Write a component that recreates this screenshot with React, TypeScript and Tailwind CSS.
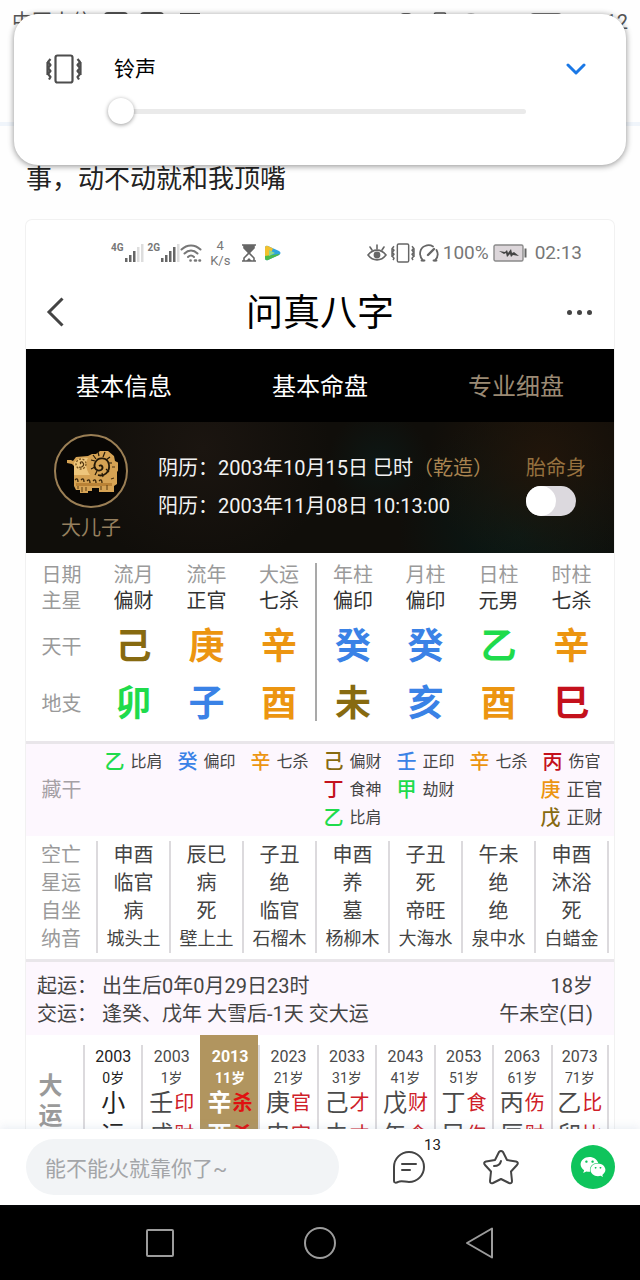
import React from 'react';
import clsx from 'clsx';
import { FaWeixin } from 'react-icons/fa';

type Element = 'wood' | 'fire' | 'earth' | 'metal' | 'water';

// 五行颜色
const ELEMENT_COLOR: Record<Element, string> = {
    wood: 'text-[#1fdb4c]',
    fire: 'text-[#c4111c]',
    earth: 'text-[#876a10]',
    metal: 'text-[#ec9510]',
    water: 'text-[#3a82e6]',
};

interface Stem {
    char: string;
    element: Element;
}

interface HiddenStem extends Stem {
    god: string;
    large?: boolean;
}

interface Pillar {
    name: string;
    star: string;
    stem: Stem;
    branch: Stem;
    hidden: HiddenStem[];
    details: string[];
}

const PILLARS: Pillar[] = [
    {
        name: '流月', star: '偏财',
        stem: { char: '己', element: 'earth' }, branch: { char: '卯', element: 'wood' },
        hidden: [{ char: '乙', element: 'wood', god: '比肩' }],
        details: ['申酉', '临官', '病', '城头土'],
    },
    {
        name: '流年', star: '正官',
        stem: { char: '庚', element: 'metal' }, branch: { char: '子', element: 'water' },
        hidden: [{ char: '癸', element: 'water', god: '偏印' }],
        details: ['辰巳', '病', '死', '壁上土'],
    },
    {
        name: '大运', star: '七杀',
        stem: { char: '辛', element: 'metal' }, branch: { char: '酉', element: 'metal' },
        hidden: [{ char: '辛', element: 'metal', god: '七杀' }],
        details: ['子丑', '绝', '临官', '石榴木'],
    },
    {
        name: '年柱', star: '偏印',
        stem: { char: '癸', element: 'water' }, branch: { char: '未', element: 'earth' },
        hidden: [
            { char: '己', element: 'earth', god: '偏财' },
            { char: '丁', element: 'fire', god: '食神' },
            { char: '乙', element: 'wood', god: '比肩' },
        ],
        details: ['申酉', '养', '墓', '杨柳木'],
    },
    {
        name: '月柱', star: '偏印',
        stem: { char: '癸', element: 'water' }, branch: { char: '亥', element: 'water' },
        hidden: [
            { char: '壬', element: 'water', god: '正印' },
            { char: '甲', element: 'wood', god: '劫财' },
        ],
        details: ['子丑', '死', '帝旺', '大海水'],
    },
    {
        name: '日柱', star: '元男',
        stem: { char: '乙', element: 'wood' }, branch: { char: '酉', element: 'metal' },
        hidden: [{ char: '辛', element: 'metal', god: '七杀' }],
        details: ['午未', '绝', '绝', '泉中水'],
    },
    {
        name: '时柱', star: '七杀',
        stem: { char: '辛', element: 'metal' }, branch: { char: '巳', element: 'fire' },
        hidden: [
            { char: '丙', element: 'fire', god: '伤官' },
            { char: '庚', element: 'metal', god: '正官', large: true },
            { char: '戊', element: 'earth', god: '正财', large: true },
        ],
        details: ['申酉', '沐浴', '死', '白蜡金'],
    },
];

const DETAIL_LABELS = ['空亡', '星运', '自坐', '纳音'];

const LUCK_CYCLES = [
    { year: '2003', age: '0岁', top: ['小', ''], bottom: ['运', ''] },
    { year: '2003', age: '1岁', top: ['壬', '印'], bottom: ['戌', '财'] },
    { year: '2013', age: '11岁', top: ['辛', '杀'], bottom: ['酉', '杀'] },
    { year: '2023', age: '21岁', top: ['庚', '官'], bottom: ['申', '官'] },
    { year: '2033', age: '31岁', top: ['己', '才'], bottom: ['未', '才'] },
    { year: '2043', age: '41岁', top: ['戊', '财'], bottom: ['午', '食'] },
    { year: '2053', age: '51岁', top: ['丁', '食'], bottom: ['巳', '伤'] },
    { year: '2063', age: '61岁', top: ['丙', '伤'], bottom: ['辰', '财'] },
    { year: '2073', age: '71岁', top: ['乙', '比'], bottom: ['卯', '比'] },
];

const ACTIVE_CYCLE = 2;

/* ---------- 图标 ---------- */

const VibrateIcon: React.FC<{ className?: string }> = ({ className }) => (
    <svg viewBox="0 0 36 30" className={className} fill="none" stroke="currentColor" strokeWidth="2.200" strokeLinejoin="round">
        <rect x="9.500" y="1.500" width="17" height="27" rx="2" />
        <path d="M4.500 5L2 8l2.500 3L2 14l2.500 3L2 20l2.500 3L3 25.500M1.500 8v13M31.500 5L34 8l-2.500 3 2.500 3-2.500 3 2.500 3-2.500 3 1.500 2.500M34.500 8v13" />
    </svg>
);

const SignalIcon: React.FC<{ bars: number }> = ({ bars }) => (
    <svg viewBox="0 0 20 18" className="h-[18px] w-5">
        {[0, 1, 2, 3, 4].map((i) => (
            <rect
                key={i}
                x={1 + i * 4}
                y={[14, 11, 7, 3, 0][i]}
                width="2.500"
                height={[4, 7, 11, 15, 18][i]}
                fill={i < bars ? '#666' : '#ddd'}
            />
        ))}
    </svg>
);

const WifiIcon = () => (
    <svg viewBox="0 0 22 18" className="h-[18px] w-[22px]" fill="none" stroke="#777" strokeWidth="2" strokeLinecap="round">
        <path d="M1.500 5.500C7 0 15 0 20.500 5.500M4.500 9.500c4-4 9-4 13 0M8 13c2-2 4-2 6 0" />
        <path d="M10.500 16.500h.1M15 16.500h1M19.500 16.500h.5" strokeWidth="2.600" />
    </svg>
);

const HourglassIcon = () => (
    <svg viewBox="0 0 14 18" className="h-[18px] w-[14px]" fill="none" stroke="#666" strokeWidth="1.600">
        <path d="M0 1h14M0 17h14M2 1v3l5 5 5-5V1M2 17v-3l5-5 5 5v3" />
        <path d="M2 1h10v3L7 9 2 4zM4 17l3-3 3 3z" fill="#666" stroke="none" />
    </svg>
);

const PlayIcon = () => (
    <svg viewBox="0 0 17 16" className="h-4 w-[17px]">
        <path d="M1 3Q1 0 4 1l11 5q3 2 0 4L4 15q-3 1-3-2z" fill="#2fa4dd" />
        <path d="M1 3Q1 0 4 1l5 2.500L5 12l-4 1z" fill="#f2c12e" />
        <path d="M1 11l14-2q1 0 0 1L4 15q-3 1-3-2z" fill="#4cbb4a" />
        <path d="M5 5l6 3-6 3z" fill="#8fd88c" />
    </svg>
);

const EyeIcon = () => (
    <svg viewBox="0 0 20 18" className="h-[18px] w-5" fill="none" stroke="#666" strokeWidth="1.600" strokeLinecap="round">
        <path d="M1 11c5-6.500 13-6.500 18 0-5 6.500-13 6.500-18 0z" />
        <circle cx="10" cy="11" r="2.600" fill="#666" />
        <path d="M10 5V1M5 6L3 3M15 6l2-3" />
    </svg>
);

const GaugeIcon = () => (
    <svg viewBox="0 0 20 18" className="h-[18px] w-5" fill="none" stroke="#666" strokeWidth="1.800" strokeLinecap="round">
        <path d="M4 16.500C-1 11 1 4 6 2c3-1.300 6-.8 8 .5M17.500 6c2 4 1.500 7.500-1.500 10.500" />
        <path d="M9 11l6-6" strokeWidth="2.400" />
        <path d="M2.500 16.500h3M14.500 16.500h3" />
    </svg>
);

const BatteryIcon = () => (
    <svg viewBox="0 0 34 18" className="h-[18px] w-[34px]">
        <rect x="1" y="1" width="29" height="16" rx="1.500" fill="#dcd6da" stroke="#8b8b8b" strokeWidth="1.400" />
        <rect x="31.500" y="4.500" width="2" height="9" fill="#666" />
        <path d="M6 7l6 1 2-2 1 3 3-4 1 4 2-1 5 4-6-1-2 2-1-3-3 3-1-4-2 1z" fill="#444" />
    </svg>
);

const RamIcon = () => (
    <svg viewBox="0 0 54 44" className="h-11 w-[54px]" fill="none">
        <path
            d="M3 11h4l2 1 3-4 12-1 4-2h4l4-3h8l6 5 1 5 4 2v6l-2 3v12l-3 2v6H35v-4h-7v3h-4v3h-8v-4h-4l-2-4V17l-2-2-5-1z"
            fill="#d6a354"
        />
        <path d="M10 14c3-5 8-6 14-5-3 4-2 12 2 17H10z" fill="#eec67c" />
        <path d="M12 34h36v3H12z" fill="#b98236" />
        <path d="M35 17c3-2 5 2 2 4-4 2-8-2-6-7 3-7 13-6 14 2 1 7-5 12-11 10" stroke="#231808" strokeWidth="1.800" />
        <path
            d="M27 11l4 1M29 6l3 4M34 3l1 4M41 3l-2 5M46 8l-4 3M48 14l-4 0M45 23l-3-3M39 28l-1-4M31 26l2-4M27 20l4-2"
            stroke="#231808"
            strokeWidth="1.200"
        />
        <circle cx="17" cy="15" r="5" stroke="#7a5520" strokeWidth="1.300" strokeDasharray="2 1.500" />
        <path d="M17 15c-2-2 1-3 2-1 2 2-1 5-4 4" stroke="#50340f" strokeWidth="1.200" />
        <path d="M11 31c2-2 3-1 3 2M17 31c2-2 3-1 3 2M23 32c2-2 3-1 3 2M29 32c2-2 3-1 3 2M35 32c2-2 3-1 3 2" stroke="#3a260a" strokeWidth="1.300" />
        <path d="M14 37v3M18 38v5M22 38v4M37 37v4M43 36v5" stroke="#5b3d12" strokeWidth="1" />
        <path d="M48 18h3M47 30l3-1" stroke="#4b3110" strokeWidth="1.200" />
    </svg>
);

/* ---------- 页面区块 ---------- */

const RingerPanel = () => (
    <section className="absolute inset-x-[14px] top-[14px] h-[151px] rounded-[24px] bg-white px-8 pt-9 shadow-[0_1px_6px_rgba(0,0,0,0.45)]">
        <div className="flex h-[38px] items-center">
            <VibrateIcon className="h-[30px] w-9 text-[#4d4d4d]" />
            <label htmlFor="ringer" className="ml-8 flex-1 text-[21px] leading-8 text-black">铃声</label>
            <button type="button" aria-label="展开" className="mr-2 text-[#1a78e6]">
                <svg viewBox="0 0 20 12" className="h-3 w-5" fill="none" stroke="currentColor" strokeWidth="3" strokeLinecap="round" strokeLinejoin="round">
                    <path d="M2 2l8 8 8-8" />
                </svg>
            </button>
        </div>
        <div className="ml-[62px] mr-[68px] mt-[10px] flex h-[26px] items-center">
            <input
                id="ringer"
                type="range"
                min="0"
                max="15"
                defaultValue="0"
                className="h-[5px] w-full appearance-none rounded-full bg-[#eaeaea] [&::-webkit-slider-thumb]:h-[26px] [&::-webkit-slider-thumb]:w-[26px] [&::-webkit-slider-thumb]:appearance-none [&::-webkit-slider-thumb]:rounded-full [&::-webkit-slider-thumb]:bg-white [&::-webkit-slider-thumb]:shadow-[0_1px_4px_rgba(0,0,0,0.4)]"
            />
        </div>
    </section>
);

const SystemStatusBar = () => (
    <div className="flex h-11 items-center px-3 text-xl text-[#555]">
        <span>中国电信</span>
        <span className="ml-3 h-5 w-6 rounded bg-[#555]" />
        <span className="ml-3 h-5 w-6 rounded bg-[#555]" />
        <span className="ml-4 h-[18px] w-5 bg-[#555]" />
        <span className="ml-auto mr-4 h-[18px] w-3 rounded-sm bg-[#666]" />
        <VibrateIcon className="mr-2 h-5 w-6" />
        <WifiIcon />
        <span className="ml-12 mr-[44px] h-[18px] w-8 rounded-sm border-2 border-[#777]" />
        <span>12</span>
    </div>
);

const ShotStatusBar = () => (
    <div className="flex h-[66px] items-center pl-[85px] pr-8 text-[#777]">
        <span className="self-start pt-5 text-[10px] font-bold leading-4">4G</span>
        <SignalIcon bars={3} />
        <span className="ml-1 self-start pt-5 text-[10px] font-bold leading-4">2G</span>
        <SignalIcon bars={4} />
        <WifiIcon />
        <span className="ml-2 flex flex-col text-center text-[13px] leading-[15px]">
            <span>4</span>
            <span>K/s</span>
        </span>
        <span className="ml-3"><HourglassIcon /></span>
        <span className="ml-2"><PlayIcon /></span>
        <span className="ml-auto"><EyeIcon /></span>
        <VibrateIcon className="ml-1 h-5 w-6 text-[#666]" />
        <span className="ml-1"><GaugeIcon /></span>
        <span className="ml-1 text-[19px]">100%</span>
        <span className="ml-1"><BatteryIcon /></span>
        <span className="ml-2 text-[19px]">02:13</span>
    </div>
);

const ShotHeader = () => (
    <header className="grid h-[63px] grid-cols-[1fr_auto_1fr] items-center px-5 pb-3">
        <button type="button" aria-label="返回" className="w-fit">
            <svg viewBox="0 0 18 30" className="h-[30px] w-[18px]" fill="none" stroke="#444" strokeWidth="3">
                <path d="M16.500 1.500L3 15l13.500 13.500" />
            </svg>
        </button>
        <h1 className="pt-1 text-[37px] leading-[48px] text-black">问真八字</h1>
        <button type="button" aria-label="更多" className="flex w-fit gap-[5px] justify-self-end pr-[2px]">
            <span className="h-[5px] w-[5px] rounded-full bg-[#444]" />
            <span className="h-[5px] w-[5px] rounded-full bg-[#444]" />
            <span className="h-[5px] w-[5px] rounded-full bg-[#444]" />
        </button>
    </header>
);

const ShotTabs = () => (
    <nav className="grid h-[73px] grid-cols-3 bg-black pt-[2px] text-2xl text-white">
        <button type="button">基本信息</button>
        <button type="button">基本命盘</button>
        <button type="button" className="text-[#9b8a74]">专业细盘</button>
    </nav>
);

const Profile = () => (
    <div className="flex h-[131px] bg-[#100e0a] bg-[radial-gradient(circle_at_88%_28%,#21150a_0,transparent_22%),radial-gradient(circle_at_84%_85%,#081a17_0,transparent_24%),radial-gradient(circle_at_60%_30%,#0d1714_0,transparent_14%),radial-gradient(circle_at_30%_20%,#1b1510_0,transparent_30%)] px-7 text-xl text-[#f2f2f2]">
        <div className="flex w-[74px] flex-col items-center pt-3">
            <div className="flex h-[74px] w-[74px] items-center justify-center rounded-full border-2 border-[#9b7f55] bg-[#080604]">
                <RamIcon />
            </div>
            <span className="mt-1 leading-8 text-[#96805f]">大儿子</span>
        </div>
        <dl className="ml-[30px] pt-[27px] leading-[38px]">
            <div className="flex">
                <dt>阴历：</dt>
                <dd>2003年10月15日 巳时<span className="text-[#a98450]">（乾造）</span></dd>
            </div>
            <div className="flex">
                <dt>阳历：</dt>
                <dd>2003年11月08日 10:13:00</dd>
            </div>
        </dl>
        <label className="ml-auto flex flex-col pt-[30px]">
            <span className="leading-8 text-[#96713f]">胎命身</span>
            <input
                type="checkbox"
                className="mt-[2px] h-[30px] w-[50px] appearance-none rounded-full bg-[#dcd9de] before:block before:h-[30px] before:w-[30px] before:rounded-full before:bg-white checked:bg-[#b79b64] checked:before:translate-x-5"
            />
        </label>
    </div>
);

const ColumnWidths = () => (
    <colgroup>
        <col className="w-[71px]" />
        {PILLARS.map((p) => <col key={p.name} />)}
    </colgroup>
);

const dividerBefore = (i: number) => i === 3 && 'border-l-2 border-[#a9a9a9]';

const PillarTable = () => (
    <div className="border-b-[3px] border-[#e9e6ea] pb-5 pr-[6px] pt-[10px]">
        <table className="w-full table-fixed border-collapse text-center text-xl text-[#333]">
            <ColumnWidths />
            <tbody>
                <tr className="h-6 leading-6 text-[#9a9a9a]">
                    <th className="font-normal">日期</th>
                    {PILLARS.map((p, i) => (
                        <td key={p.name} className={clsx(dividerBefore(i))}>{p.name}</td>
                    ))}
                </tr>
                <tr className="h-7 leading-7">
                    <th className="font-normal text-[#9a9a9a]">主星</th>
                    {PILLARS.map((p, i) => (
                        <td key={p.name} className={clsx(dividerBefore(i))}>{p.star}</td>
                    ))}
                </tr>
                <tr className="h-16">
                    <th className="font-normal text-[#9a9a9a]">天干</th>
                    {PILLARS.map((p, i) => (
                        <td key={p.name} className={clsx('text-[36px] font-bold leading-[34px]', ELEMENT_COLOR[p.stem.element], dividerBefore(i))}>
                            {p.stem.char}
                        </td>
                    ))}
                </tr>
                <tr>
                    <th className="pt-2 font-normal text-[#9a9a9a]">地支</th>
                    {PILLARS.map((p, i) => (
                        <td key={p.name} className={clsx('pt-2 text-[36px] font-bold leading-[34px]', ELEMENT_COLOR[p.branch.element], dividerBefore(i))}>
                            {p.branch.char}
                        </td>
                    ))}
                </tr>
            </tbody>
        </table>
    </div>
);

const HiddenStemTable = () => (
    <div className="h-[92px] bg-[#fdf7fe] pr-[6px] pt-1">
        <table className="w-full table-fixed border-collapse text-center text-xl text-[#444]">
            <ColumnWidths />
            <tbody>
                <tr>
                    <th className="font-normal text-[#a5a0a5]">藏干</th>
                    {PILLARS.map((p) => (
                        <td key={p.name} className="align-top">
                            {p.hidden.map((h) => (
                                <div key={h.char} className="flex h-7 items-center justify-center gap-[6px]">
                                    <span className={clsx('font-medium', ELEMENT_COLOR[h.element])}>{h.char}</span>
                                    <span className={h.large ? 'text-lg' : 'text-base'}>{h.god}</span>
                                </div>
                            ))}
                        </td>
                    ))}
                </tr>
            </tbody>
        </table>
    </div>
);

const DetailTable = () => (
    <div className="border-b-[3px] border-[#e9e6ea] pb-[6px] pr-[5px] pt-[5px]">
        <table className="w-full table-fixed border-collapse text-center text-xl text-[#444]">
            <ColumnWidths />
            <tbody>
                {DETAIL_LABELS.map((label, row) => (
                    <tr key={label} className="h-7 leading-7">
                        <th className="font-normal text-[#9a9a9a]">{label}</th>
                        {PILLARS.map((p) => (
                            <td key={p.name} className={clsx('whitespace-nowrap border-x-2 border-[#dcdadd]', row === 3 && 'text-lg leading-7')}>
                                {p.details[row]}
                            </td>
                        ))}
                    </tr>
                ))}
            </tbody>
        </table>
    </div>
);

const LuckSummary = () => (
    <div className="h-[73px] bg-[#fdf7fe] pl-[11px] pr-[21px] pt-[10px] text-xl leading-7 text-[#444]">
        <div className="flex">
            <span className="w-[65px]">起运：</span>
            <span>出生后0年0月29日23时</span>
            <span className="ml-auto">18岁</span>
        </div>
        <div className="flex">
            <span className="w-[65px]">交运：</span>
            <span>逢癸、戊年 大雪后-1天 交大运</span>
            <span className="ml-auto">午未空(日)</span>
        </div>
    </div>
);

const LuckCycles = () => (
    <div className="flex pr-[5px]">
        <div className="flex w-[57px] flex-col items-center pr-2 pt-9 text-2xl font-bold leading-[30px] text-[#9a9a9a]">
            <span>大</span>
            <span>运</span>
        </div>
        <div className="grid flex-1 grid-cols-9">
            {LUCK_CYCLES.map((c, i) => {
                const active = i === ACTIVE_CYCLE;
                return (
                    <button
                        key={c.year + c.age}
                        type="button"
                        className={clsx('pt-[10px]', active ? 'bg-[#b1955f] font-bold text-white' : i === 0 ? 'text-[#222]' : 'text-[#4a4a4a]')}
                    >
                        <span
                            className={clsx(
                                'flex flex-col items-center border-l-2',
                                active ? 'border-[#b1955f]' : 'border-[#dcdadd]',
                                i === LUCK_CYCLES.length - 1 && 'border-r-2',
                            )}
                        >
                            <span className="text-base leading-6">{c.year}</span>
                            <span className="text-sm leading-[18px]">{c.age}</span>
                            {[c.top, c.bottom].map(([char, god]) => (
                                <span key={char} className="flex items-center gap-px text-2xl leading-8">
                                    {char}
                                    {god && <span className={clsx('pt-px text-xl leading-[31px]', active ? 'text-[#e01010]' : 'text-[#cf2028]')}>{god}</span>}
                                </span>
                            ))}
                        </span>
                    </button>
                );
            })}
        </div>
    </div>
);

const CommentBar = () => (
    <footer className="relative flex h-[76px] items-center gap-12 bg-white pl-[26px] pr-[25px] shadow-[0_-2px_8px_rgba(120,150,190,0.15)]">
        <input
            type="text"
            aria-label="评论"
            placeholder="能不能火就靠你了~"
            className="h-14 min-w-0 flex-1 rounded-full bg-[#f2f4f6] px-[19px] pt-1 text-[21px] outline-none placeholder:text-[#a3a5a8]"
        />
        <button type="button" aria-label="评论列表" className="relative flex h-11 w-11 items-center justify-center text-[#444]">
            <svg viewBox="0 0 34 34" className="h-[34px] w-[34px]" fill="none" stroke="currentColor" strokeWidth="2" strokeLinecap="round" strokeLinejoin="round">
                <path d="M2 31V17A15 15 0 0 1 17 2a15 15 0 0 1 0 30C13 32 9 30 6 32c-2 1-4 1-4-1z" />
                <path d="M10 14h14M10 20h8" />
            </svg>
            <span className="absolute left-[37px] top-[-10px] text-[15px] leading-5 text-[#222]">13</span>
        </button>
        <button type="button" aria-label="收藏" className="flex h-11 w-11 items-center justify-center text-[#444]">
            <svg viewBox="0 0 36 36" className="h-9 w-9" fill="none" stroke="currentColor" strokeWidth="2" strokeLinecap="round" strokeLinejoin="round">
                <path d="M16 3q2-2 4 0l4 8 9 1.500q3 1 1 3.500l-6 6.500 1 9.500q0 3-3 2l-8-4-8 4q-3 1-3-2l1-9.500L2 16q-2-2.500 1-3.500l9-1.500z" />
                <path d="M11 17q6 0 7-5" />
            </svg>
        </button>
        <button type="button" aria-label="微信分享" className="flex h-11 w-11 items-center justify-center rounded-full bg-[#0fc45c] text-white">
            <FaWeixin className="h-[26px] w-[26px]" />
        </button>
    </footer>
);

const SystemNav = () => (
    <nav className="flex h-[75px] items-center bg-black px-20 text-[#9c9c9c]">
        <button type="button" aria-label="最近任务" className="flex flex-1 justify-center">
            <svg viewBox="0 0 32 32" className="h-8 w-8" fill="none" stroke="currentColor" strokeWidth="2">
                <rect x="3" y="3" width="26" height="26" rx="1" />
            </svg>
        </button>
        <button type="button" aria-label="主页" className="flex flex-1 justify-center">
            <svg viewBox="0 0 32 32" className="h-8 w-8" fill="none" stroke="currentColor" strokeWidth="2">
                <circle cx="16" cy="16" r="15" />
            </svg>
        </button>
        <button type="button" aria-label="返回" className="flex flex-1 justify-center">
            <svg viewBox="0 0 32 32" className="h-8 w-8" fill="none" stroke="currentColor" strokeWidth="2" strokeLinejoin="round">
                <path d="M28 1.500v29L3 16z" />
            </svg>
        </button>
    </nav>
);

const App: React.FC = () => (
    <div className="relative flex h-screen flex-col overflow-hidden bg-[#fefefe] font-['Roboto','Noto_Sans_CJK_SC',sans-serif]">
        <main className="min-h-0 flex-1 overflow-hidden">
            <div className="h-[126px] border-b-4 border-[#f0f5fb]">
                <SystemStatusBar />
            </div>
            <p className="px-[26px] pt-[34px] text-[26px] leading-[38px] text-[#222]">事，动不动就和我顶嘴</p>
            <article className="mx-[26px] mt-[22px] overflow-hidden rounded-t-md bg-white shadow-[0_0_0_1px_#f1f1f1]">
                <ShotStatusBar />
                <ShotHeader />
                <ShotTabs />
                <Profile />
                <PillarTable />
                <HiddenStemTable />
                <DetailTable />
                <LuckSummary />
                <LuckCycles />
            </article>
        </main>
        <CommentBar />
        <SystemNav />
        <RingerPanel />
    </div>
);

export default App;
